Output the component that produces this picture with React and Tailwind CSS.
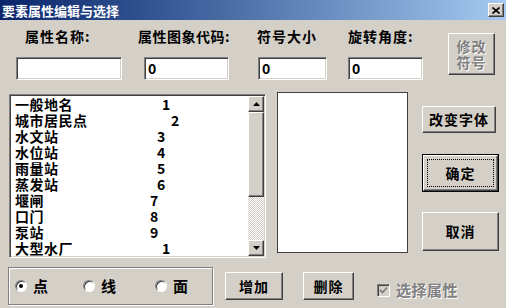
const items = [
  { name: '一般地名', num: '1', w: 'w-[147px]' },
  { name: '城市居民点', num: '2', w: 'w-[156px]' },
  { name: '水文站', num: '3', w: 'w-[142px]' },
  { name: '水位站', num: '4', w: 'w-[142px]' },
  { name: '雨量站', num: '5', w: 'w-[142px]' },
  { name: '蒸发站', num: '6', w: 'w-[142px]' },
  { name: '堰闸', num: '7', w: 'w-[135px]' },
  { name: '口门', num: '8', w: 'w-[135px]' },
  { name: '泵站', num: '9', w: 'w-[135px]' },
  { name: '大型水厂', num: '1', w: 'w-[147px]' },
];

const raised =
  'border border-t-white border-l-white border-r-[#404040] border-b-[#404040] shadow-[inset_-1px_-1px_#808080,inset_1px_1px_#d4d0c8] bg-[#d4d0c8]';
const sunken =
  'border border-t-[#808080] border-l-[#808080] border-r-white border-b-white shadow-[inset_1px_1px_#404040,inset_-1px_-1px_#d4d0c8]';

const Field = ({ value, className }) => (
  <div className={`${sunken} bg-white h-[23px] flex items-center pl-[3px] text-[14px] ${className}`}>
    {value}
  </div>
);

const Btn = ({ children, className }) => (
  <div className={`${raised} flex items-center justify-center text-[14px] tracking-[1px] ${className}`}>
    {children}
  </div>
);

const Radio = ({ checked, label, className }) => (
  <div className={`flex items-center ${className}`}>
    <div className="w-[12px] h-[12px] rounded-full bg-white border border-t-[#808080] border-l-[#808080] border-r-white border-b-white shadow-[inset_1px_1px_#404040] flex items-center justify-center">
      {checked && <div className="w-[4px] h-[4px] rounded-full bg-black" />}
    </div>
    <span className="ml-[6px] text-[15px]">{label}</span>
  </div>
);

export default function App() {
  return (
    <div className="w-[506px] h-[308px] bg-[#d4d0c8] overflow-hidden font-['Noto_Sans_CJK_SC',sans-serif] font-bold text-black select-none">
      {/* title bar */}
      <div className="h-[20px] flex items-center justify-between bg-gradient-to-r from-[#0a246a] to-[#a6caf0] pl-[2px] pr-[2px]">
        <span className="text-white text-[13px] leading-none">要素属性编辑与选择</span>
        <div className={`${raised} w-[16px] h-[14px] flex items-center justify-center`}>
          <svg width="8" height="7" viewBox="0 0 8 7">
            <path d="M0.5 0.5L7.5 6.5M7.5 0.5L0.5 6.5" stroke="black" strokeWidth="1.6" />
          </svg>
        </div>
      </div>

      {/* fields row */}
      <div className="flex items-start pt-[8px]">
        <div className="ml-[16px] w-[106px]">
          <div className="pl-[9px] h-[16px] leading-[16px] text-[14px] tracking-[1px]">属性名称:</div>
          <Field value="" className="mt-[13px] w-full" />
        </div>
        <div className="ml-[16px] w-[94px]">
          <div className="h-[16px] leading-[16px] text-[14px] tracking-[0.5px] whitespace-nowrap">属性图象代码:</div>
          <Field value="0" className="mt-[13px] ml-[6px] w-[85px]" />
        </div>
        <div className="ml-[25px] w-[70px]">
          <div className="h-[16px] leading-[16px] text-[14px] tracking-[1px] whitespace-nowrap">符号大小</div>
          <Field value="0" className="mt-[13px] ml-[1px] w-[69px]" />
        </div>
        <div className="ml-[21px] w-[75px]">
          <div className="h-[16px] leading-[16px] text-[14px] tracking-[1px] whitespace-nowrap">旋转角度:</div>
          <Field value="0" className="mt-[13px] w-[75px]" />
        </div>
        <Btn className="ml-[25px] mt-[5px] w-[47px] h-[42px] flex-col leading-[16px] text-[#808080] [text-shadow:1px_1px_0_#fff] tracking-[0px]">
          <span>修改</span>
          <span>符号</span>
        </Btn>
      </div>

      {/* middle row */}
      <div className="flex items-start mt-[12px]">
        <div className={`${sunken} bg-white ml-[9px] mt-[2px] w-[257px] h-[164px] flex p-[1px]`}>
          <div className="flex-1 pl-[4px] text-[14px] tracking-[0.5px] overflow-hidden">
            {items.map((it, i) => (
              <div key={i} className="h-[16px] leading-[16px] flex whitespace-nowrap">
                <span className={it.w}>{it.name}</span>
                <span>{it.num}</span>
              </div>
            ))}
          </div>
          <div className="w-[16px] flex flex-col">
            <div className={`${raised} h-[16px] flex items-center justify-center`}>
              <svg width="7" height="4" viewBox="0 0 7 4"><path d="M3.5 0L7 4H0Z" fill="black" /></svg>
            </div>
            <div className={`${raised} h-[85px]`} />
            <div className="flex-1 bg-[image:repeating-conic-gradient(#ffffff_0_25%,#d4d0c8_0_50%)] bg-[length:2px_2px]" />
            <div className={`${raised} h-[16px] flex items-center justify-center`}>
              <svg width="7" height="4" viewBox="0 0 7 4"><path d="M0 0H7L3.5 4Z" fill="black" /></svg>
            </div>
          </div>
        </div>

        <div className="ml-[11px] w-[131px] h-[161px] bg-white border border-[#404040]" />

        <div className="ml-[14px] w-[77px] flex flex-col">
          <Btn className="mt-[14px] w-[74px] h-[27px]">改变字体</Btn>
          <div className="mt-[21px] h-[38px] border border-black relative">
            <Btn className="w-full h-full">确定</Btn>
            <div className="absolute inset-[4px] border border-dotted border-black" />
          </div>
          <Btn className="mt-[20px] h-[39px]">取消</Btn>
        </div>
      </div>

      {/* bottom row */}
      <div className="flex items-start mt-[9px]">
        <div className="ml-[8px] w-[205px] h-[38px] border border-[#808080] shadow-[1px_1px_0_#fff,inset_1px_1px_0_#fff] flex items-center">
          <Radio checked label="点" className="ml-[6px]" />
          <Radio label="线" className="ml-[35px]" />
          <Radio label="面" className="ml-[39px]" />
        </div>
        <Btn className="ml-[12px] mt-[5px] w-[58px] h-[28px]">增加</Btn>
        <Btn className="ml-[20px] mt-[5px] w-[51px] h-[28px]">删除</Btn>
        <div className="ml-[23px] mt-[12px] flex items-center">
          <div className={`${sunken} w-[13px] h-[13px] bg-[#d4d0c8] flex items-center justify-center`}>
            <svg width="9" height="9" viewBox="0 0 9 9">
              <path d="M1 4L3.5 6.5L8 1.5" stroke="#808080" strokeWidth="1.8" fill="none" />
            </svg>
          </div>
          <span className="ml-[6px] text-[15px] tracking-[0.5px] text-[#808080] [text-shadow:1px_1px_0_#fff]">选择属性</span>
        </div>
      </div>
    </div>
  );
}
